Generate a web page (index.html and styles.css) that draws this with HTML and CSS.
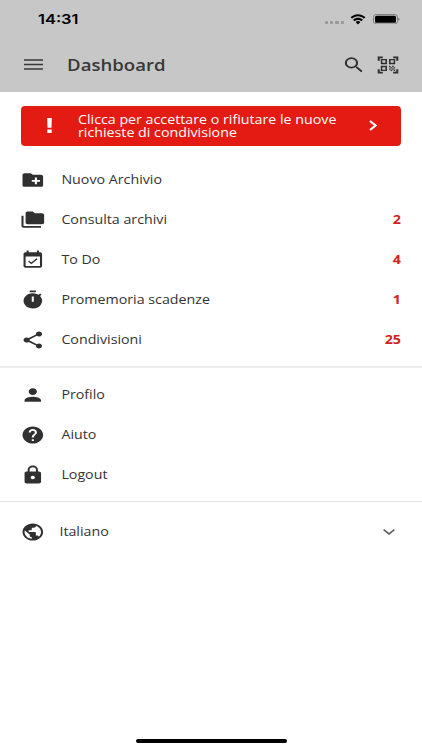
FILE: index.html
```html
<!DOCTYPE html>
<html lang="it">
<head>
<meta charset="utf-8">
<title>Dashboard</title>
<link rel="stylesheet" href="styles.css">
</head>
<body>
<div class="app">
  <header class="top">
    <div class="status">
      <span class="time">14:31</span>
      <span class="dots"><i></i><i></i><i></i><i></i></span>
      <svg class="wifi" viewBox="0 0 16 11" preserveAspectRatio="none"><path d="M8 2.3c2.2 0 4.2.9 5.700 2.300.1.100.300.100.400 0l1.100-1.100c.1-.1.100-.300 0-.4C11.200-.8 4.800-.8.8 3.100c-.1.100-.100.300 0 .4l1.100 1.100c.1.100.300.100.4 0C3.800 3.200 5.800 2.300 8 2.300zM8 5.900c1.200 0 2.300.4 3.200 1.200.1.100.300.100.4 0l1.100-1.100c.1-.1.100-.300 0-.4-2.700-2.500-6.800-2.500-9.400 0-.1.100-.1.300 0 .4l1.100 1.100c.1.100.300.100.4 0C5.700 6.300 6.800 5.900 8 5.900zM10.200 8.300c.1-.1.100-.300 0-.4-1.300-1.100-3.100-1.100-4.400 0-.1.100-.1.300 0 .4l1.900 1.900c.2.200.400.200.6 0z"/></svg>
      <svg class="battery" viewBox="0 0 27 10" preserveAspectRatio="none"><rect x=".5" y=".5" width="24" height="9" rx="2.600" fill="none" stroke="#777" stroke-width=".9"/><rect x="2" y="1.700" width="21" height="6.600" rx="1.500"/><path d="M25.500 3.500c1.400.5 1.400 2.500 0 3z" fill="#666"/></svg>
    </div>
    <div class="bar">
      <svg class="icon menu" viewBox="0 0 19 11" preserveAspectRatio="none"><path d="M0 1h19M0 5.500h19M0 10h19" stroke="#383838" stroke-width="1.500"/></svg>
      <h1>Dashboard</h1>
      <svg class="icon search" viewBox="0 0 24 24" preserveAspectRatio="none"><path d="M15.500 14h-.79l-.28-.27A6.471 6.471 0 0 0 16 9.500 6.500 6.500 0 1 0 9.500 16c1.610 0 3.090-.59 4.230-1.570l.27.28v.79l5 4.990L20.490 19l-4.990-5zm-6 0C7.010 14 5 11.990 5 9.500S7.010 5 9.500 5 14 7.010 14 9.500 11.990 14 9.500 14z"/></svg>
      <svg class="icon qr" viewBox="0 0 24 24" preserveAspectRatio="none"><path d="M9.500 6.500v3h-3v-3h3M11 5H5v6h6V5zm-1.500 9.500v3h-3v-3h3M11 13H5v6h6v-6zm6.500-6.500v3h-3v-3h3M19 5h-6v6h6V5zm-6 8h1.500v1.500H13V13zm1.500 1.500H16V16h-1.500v-1.500zM16 13h1.500v1.500H16V13zm-3 3h1.500v1.500H13V16zm1.500 1.500H16V19h-1.500v-1.500zM16 16h1.500v1.500H16V16zm1.500-1.500H19V16h-1.500v-1.500zm0 3H19V19h-1.500v-1.500zM22 7h-2V4h-3V2h5v5zm0 15v-5h-2v3h-3v2h5zM2 22h5v-2H4v-3H2v5zM2 2v5h2V4h3V2H2z"/></svg>
    </div>
  </header>
  <main>
    <div class="alert">
      <svg class="bang" viewBox="0 0 5 15" preserveAspectRatio="none"><path d="M.2 0h4.600l-.3 9.800H.5zM.3 11.500h4.400V15H.3z" fill="#fff"/></svg>
      <p>Clicca per accettare o rifiutare le nuove<br>richieste di condivisione</p>
      <svg class="next" viewBox="0 0 8 11" preserveAspectRatio="none"><path d="M1 1l5.500 4.500L1 10" fill="none" stroke="#fff" stroke-width="2.200"/></svg>
    </div>
    <nav>
      <div class="row"><svg class="icon" viewBox="0 0 24 24" preserveAspectRatio="none"><path d="M20 6h-8l-2-2H4c-1.110 0-1.990.89-1.990 2L2 18c0 1.110.89 2 2 2h16c1.110 0 2-.89 2-2V8c0-1.110-.89-2-2-2zm-1 8h-3v3h-2v-3h-3v-2h3V9h2v3h3v2z"/></svg><span class="label">Nuovo Archivio</span></div>
      <div class="row"><svg class="icon" viewBox="0 0 24 24" preserveAspectRatio="none"><path d="M3 7H1v12c0 1.100.9 2 2 2h17v-2H3V7zm18-3h-7l-2-2H7c-1.100 0-1.990.9-1.990 2L5 15c0 1.100.9 2 2 2h14c1.100 0 2-.9 2-2V6c0-1.100-.9-2-2-2z"/></svg><span class="label">Consulta archivi</span><b>2</b></div>
      <div class="row"><svg class="icon" viewBox="0 0 24 24" preserveAspectRatio="none"><path d="M16.530 11.060L15.470 10l-4.880 4.880-2.120-2.120-1.060 1.060L10.590 17l5.940-5.940zM19 3h-1V1h-2v2H8V1H6v2H5c-1.110 0-1.990.9-1.990 2L3 19c0 1.100.89 2 2 2h14c1.100 0 2-.9 2-2V5c0-1.100-.9-2-2-2zm0 16H5V8h14v11z"/></svg><span class="label">To Do</span><b>4</b></div>
      <div class="row"><svg class="icon" viewBox="0 0 24 24" preserveAspectRatio="none"><path fill-rule="evenodd" d="M15 1H9v2h6V1zm-4 13h2V8h-2v6zm8.030-6.610l1.420-1.420c-.43-.51-.9-.99-1.410-1.410l-1.420 1.420A8.962 8.962 0 0 0 12 4c-4.970 0-9 4.030-9 9s4.020 9 9 9a8.994 8.994 0 0 0 7.030-14.610z"/></svg><span class="label">Promemoria scadenze</span><b>1</b></div>
      <div class="row"><svg class="icon" viewBox="0 0 24 24" preserveAspectRatio="none"><path d="M18 16.080c-.76 0-1.440.3-1.960.77L8.910 12.700c.05-.23.09-.46.09-.7s-.04-.47-.09-.7l7.050-4.110c.54.5 1.250.81 2.040.81 1.660 0 3-1.340 3-3s-1.340-3-3-3-3 1.340-3 3c0 .24.04.47.09.7L8.040 9.810C7.500 9.310 6.790 9 6 9c-1.660 0-3 1.340-3 3s1.340 3 3 3c.79 0 1.500-.31 2.040-.81l7.120 4.160c-.05.21-.08.43-.08.65 0 1.610 1.310 2.920 2.920 2.920s2.920-1.310 2.920-2.920-1.310-2.920-2.920-2.920z"/></svg><span class="label">Condivisioni</span><b>25</b></div>
    </nav>
    <nav class="second">
      <div class="row"><svg class="icon" viewBox="0 0 24 24" preserveAspectRatio="none"><path d="M12 12c2.210 0 4-1.790 4-4s-1.790-4-4-4-4 1.790-4 4 1.790 4 4 4zm0 2c-2.670 0-8 1.340-8 4v2h16v-2c0-2.660-5.330-4-8-4z"/></svg><span class="label">Profilo</span></div>
      <div class="row"><svg class="icon" viewBox="0 0 24 24" preserveAspectRatio="none"><path d="M12 2C6.480 2 2 6.480 2 12s4.480 10 10 10 10-4.480 10-10S17.520 2 12 2zm1 17h-2v-2h2v2zm2.070-7.750l-.9.920C13.450 12.900 13 13.500 13 15h-2v-.5c0-1.100.45-2.100 1.170-2.830l1.240-1.260c.37-.36.59-.86.59-1.410 0-1.100-.9-2-2-2s-2 .9-2 2H8c0-2.210 1.790-4 4-4s4 1.790 4 4c0 .88-.36 1.680-.93 2.250z"/></svg><span class="label">Aiuto</span></div>
      <div class="row"><svg class="icon" viewBox="0 0 24 24" preserveAspectRatio="none"><path d="M18 8h-1V6c0-2.760-2.240-5-5-5S7 3.240 7 6v2H6c-1.100 0-2 .9-2 2v10c0 1.100.9 2 2 2h12c1.100 0 2-.9 2-2V10c0-1.100-.9-2-2-2zm-6 9c-1.100 0-2-.9-2-2s.9-2 2-2 2 .9 2 2-.9 2-2 2zm3.100-9H8.900V6c0-1.710 1.390-3.100 3.100-3.100s3.100 1.390 3.100 3.100v2z"/></svg><span class="label">Logout</span></div>
    </nav>
    <div class="row lang"><svg class="icon" viewBox="0 0 24 24" preserveAspectRatio="none"><path d="M12 2C6.480 2 2 6.480 2 12s4.480 10 10 10 10-4.480 10-10S17.520 2 12 2zm-1 17.930c-3.950-.49-7-3.850-7-7.930 0-.62.08-1.210.21-1.790L9 15v1c0 1.100.9 2 2 2v1.930zm6.900-2.540c-.26-.81-1-1.390-1.900-1.390h-1v-3c0-.55-.45-1-1-1H8v-2h2c.55 0 1-.45 1-1V7h2c1.100 0 2-.9 2-2v-.41c2.930 1.190 5 4.060 5 7.410 0 2.080-.8 3.970-2.100 5.390z"/></svg><span class="label">Italiano</span><svg class="down" viewBox="0 0 12 6" preserveAspectRatio="none"><path d="M.6.7L6 5 11.400.7" fill="none" stroke="#606060" stroke-width="1.600"/></svg></div>
  </main>
  <div class="home"></div>
</div>
</body>
</html>
```
FILE: styles.css
```css
* { box-sizing: border-box; }
body { margin: 0; background: #fff; font-family: "Open Sans", sans-serif; color: #333; }
.app { width: 422px; height: 750px; display: flex; flex-direction: column; overflow: hidden; background: #fff; }
svg { display: block; flex: none; }
.icon { width: 24px; height: 20px; fill: #303030; }
.top { height: 92px; background: #c7c7c7; }
.status { height: 38px; padding: 0 22px 0 38px; display: flex; align-items: center; }
.time { font: 600 13.700px/16px Inter, sans-serif; color: #000; transform: scaleX(1.200); transform-origin: left; margin-right: auto; }
.dots { display: flex; gap: 2px; margin: 7px 6px 0 0; }
.dots i { width: 3.300px; height: 2.800px; border-radius: 1px; background: #999; }
.wifi { width: 16px; height: 11px; margin-right: 7px; }
.battery { width: 27px; height: 10.500px; }
.bar { height: 53px; padding: 0 22px 0 24px; display: flex; align-items: center; }
.menu { width: 19px; height: 11px; margin-right: 24px; }
h1 { margin: 0 auto 0 0; font-size: 15.800px; line-height: 22px; font-weight: 600; color: #383838; transform: scaleX(1.177); transform-origin: left; }
.search { margin-right: 10px; transform: scale(1.020); }
.qr { transform: scale(1.030); }
main { flex: 1; }
.alert { height: 40px; margin: 14px 21px 13.500px 21px; padding: 0 24px 0 25.500px; display: flex; align-items: center; border-radius: 4px; background: #e41b13; color: #fff; }
.bang { width: 5px; height: 15px; margin: 0 26.500px 1px 0; }
.alert p { margin: 0 auto 0 0; font-size: 12.200px; line-height: 13.300px; white-space: nowrap; transform: scaleX(1.168); transform-origin: left; }
.next { width: 8px; height: 11px; margin-bottom: 1px; }
.row { height: 40.150px; padding: 0 21px; display: flex; align-items: center; }
.row .icon { transform: translateX(-.2px) scale(1.030); }
.label { margin-left: 16px; font-size: 12.200px; line-height: 18px; white-space: nowrap; transform: translateX(.4px) scaleX(1.168); transform-origin: left; }
.row b { margin-left: auto; font-size: 12.200px; line-height: 18px; color: #d32020; transform: scaleX(1.168); transform-origin: right; }
.second { margin-top: 6px; padding: 6.500px 0 5.500px; border-top: 2px solid #ededed; border-bottom: 1px solid #e2e2e2; }
.lang { height: 61.500px; padding-right: 27px; }
.lang .label { margin-left: 14px; }
.down { width: 12px; height: 6px; margin-left: auto; }
.home { width: 151px; height: 4.500px; margin: 0 auto 7px; border-radius: 3px; background: #000; }
```
